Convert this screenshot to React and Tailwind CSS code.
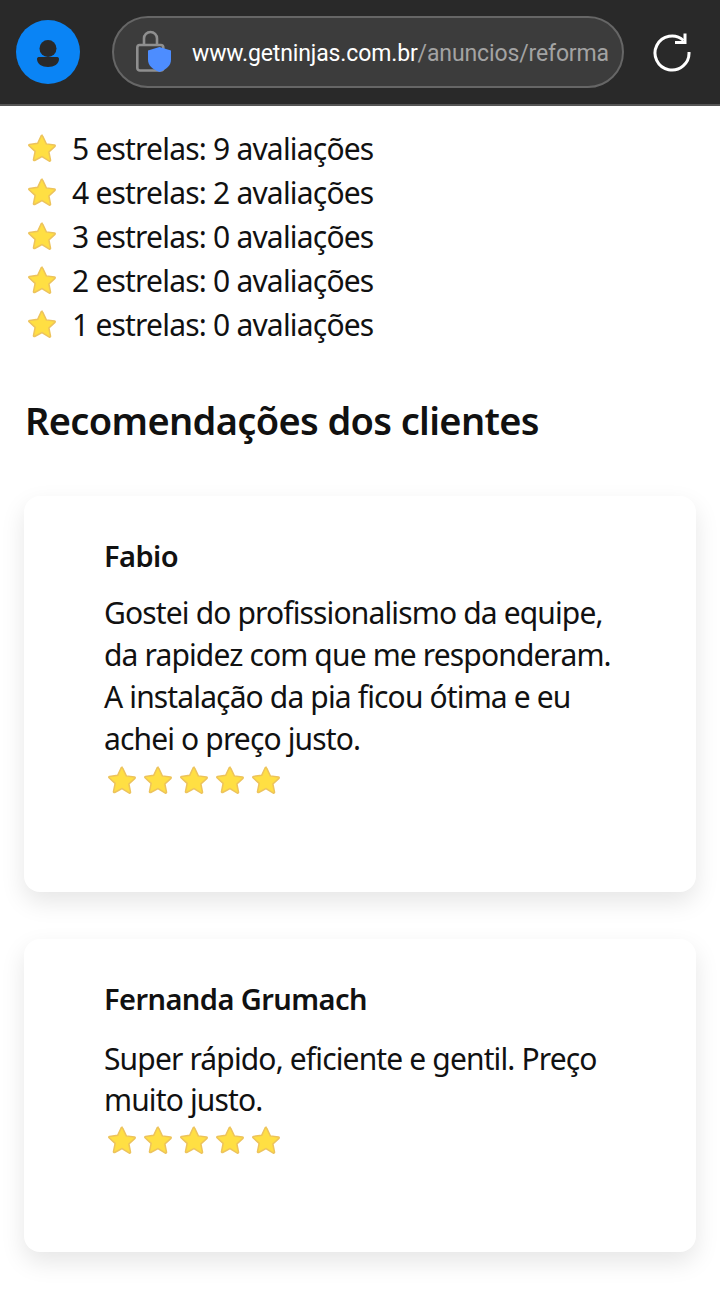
const font = { fontFamily: '"Noto Sans", sans-serif' }

function Star({ className }) {
  return (
    <svg viewBox="0 0 24 24" className={className}>
      <path
        d="M12 1.500c.3 0 .5.2.7.5l3 6.500 7 .9c.6.1.8.8.4 1.200l-5.200 4.800 1.400 7c.1.600-.5 1.100-1 .8L12 19.300l-6.300 3.400c-.5.300-1.100-.2-1-.8l1.400-7-5.200-4.800c-.4-.4-.2-1.100.4-1.200l7-.9 3-6.500c.2-.3.400-.5.700-.5z"
        fill="#ffdf43"
        stroke="#edc35c"
        strokeWidth="1.300"
      />
    </svg>
  )
}

const resumo = [
  { n: 5, total: 9 },
  { n: 4, total: 2 },
  { n: 3, total: 0 },
  { n: 2, total: 0 },
  { n: 1, total: 0 },
]

const recomendacoes = [
  {
    nome: 'Fabio',
    linhas: [
      'Gostei do profissionalismo da equipe,',
      'da rapidez com que me responderam.',
      'A instalação da pia ficou ótima e eu',
      'achei o preço justo.',
    ],
    card: 'h-[396px]',
    texto: 'mt-[15px] leading-[42px]',
  },
  {
    nome: 'Fernanda Grumach',
    linhas: ['Super rápido, eficiente e gentil. Preço', 'muito justo.'],
    card: 'h-[313px]',
    texto: 'mt-[18px] leading-[41px]',
  },
]

export default function App() {
  return (
    <div className="h-[1297px] overflow-hidden bg-white text-[#111]">
      {/* Barra do navegador */}
      <div className="h-[106px] flex items-center bg-[#292929] border-b-2 border-[#555] pl-4 pr-[27px]">
        <div className="w-16 h-16 rounded-full bg-[#0a84f5] shrink-0">
          <svg viewBox="0 0 64 64" className="w-16 h-16">
            <ellipse cx="32" cy="28.500" rx="8.500" ry="8.500" fill="#292929" />
            <path d="M21 39c0-1.500 1-2 2.500-2h17c1.500 0 2.500.5 2.500 2 0 5-5 8-11 8s-11-3-11-8z" fill="#292929" />
          </svg>
        </div>
        <div className="ml-8 w-[512px] h-[72px] rounded-full bg-[#3c3c3c] border-2 border-[#666] flex items-center pl-[21px] pr-[13px]">
          <svg viewBox="0 0 38 46" className="w-[38px] h-[46px] shrink-0">
            <path d="M9 16V9.500a6.500 6.500 0 0 1 13 0V16" fill="none" stroke="#8f8f8f" strokeWidth="2.600" />
            <rect x="2.300" y="16" width="26" height="25.500" rx="2.500" fill="none" stroke="#8f8f8f" strokeWidth="2.600" />
            <path d="M24.500 18l11.500 3.500v9c0 6-4.500 10-11.500 12.500C17.500 40.500 13 36.500 13 30.500v-9z" fill="#4d8dff" />
          </svg>
          <div className="ml-[19px] pt-0.5 flex-1 whitespace-nowrap text-[23px] tracking-[-0.13px] font-['Roboto',sans-serif] leading-none">
            <span className="text-white">www.getninjas.com.br</span>
            <span className="text-[#a3a3a3]">/anuncios/reforma</span>
          </div>
        </div>
        <svg viewBox="0 0 40 40" className="ml-[28px] w-10 h-10 shrink-0" fill="none" stroke="#fff" strokeWidth="3">
          <path d="M31.500 8.500A17 17 0 1 0 37 20" />
          <path d="M23 10.500h10v-9" />
        </svg>
      </div>

      <div style={font}>
        {/* Resumo das avaliações */}
        <ul className="mt-5 pl-7">
          {resumo.map(r => (
            <li key={r.n} className="h-11 flex items-center text-[30px] tracking-[-0.8px]">
              <Star className="w-7 h-7 shrink-0" />
              <span className="ml-4">{r.n} estrelas: {r.total} avaliações</span>
            </li>
          ))}
        </ul>

        <h2 className="mt-12 ml-[25px] text-[38px] leading-[52px] font-semibold tracking-[-0.65px]">
          Recomendações dos clientes
        </h2>

        {/* Cards */}
        <div className="mt-[50px] px-6 flex flex-col gap-[47px]">
          {recomendacoes.map(c => (
            <div
              key={c.nome}
              className={`${c.card} rounded-2xl bg-white shadow-[0_10px_24px_rgba(0,0,0,0.1)] pl-20 pt-[39px]`}
            >
              <p className="text-[29px] leading-[42px] font-semibold tracking-[-0.55px]">{c.nome}</p>
              <div className={`${c.texto} text-[30px] tracking-[-0.86px] whitespace-nowrap`}>
                {c.linhas.map(l => <p key={l}>{l}</p>)}
              </div>
              <div className="flex gap-2 mt-[6px] ml-1">
                {[0, 1, 2, 3, 4].map(i => <Star key={i} className="w-7 h-7" />)}
              </div>
            </div>
          ))}
        </div>
      </div>
    </div>
  )
}
